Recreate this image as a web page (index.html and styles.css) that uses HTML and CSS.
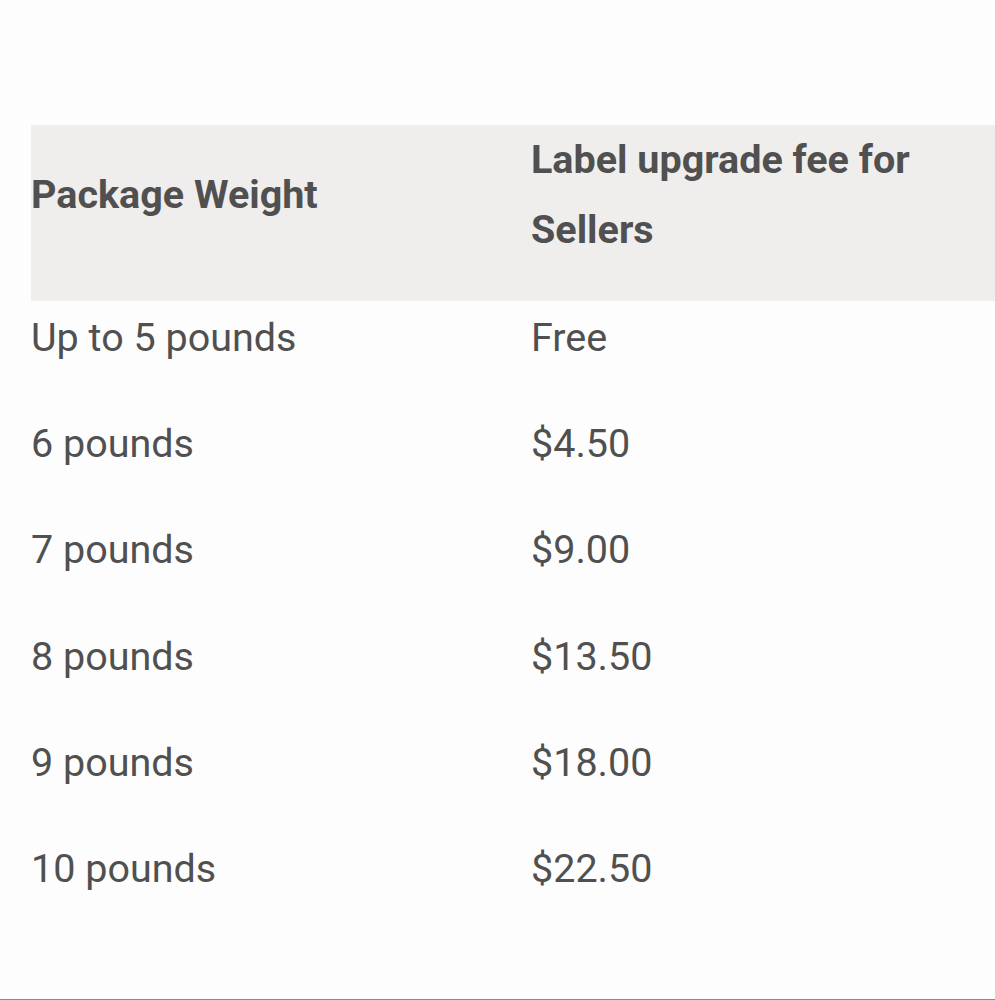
FILE: index.html
```html
<!DOCTYPE html>
<html>
<head>
  <meta charset="UTF-8">
  <title>Label upgrade fees</title>
  <link rel="stylesheet" href="styles.css">
</head>
<body>
  <div class="page">
    <table class="fee-table">
      <thead>
        <tr>
          <th class="col-weight">Package Weight</th>
          <th class="col-fee">Label upgrade fee for Sellers</th>
        </tr>
      </thead>
      <tbody>
        <tr><td>Up to 5 pounds</td><td>Free</td></tr>
        <tr><td>6 pounds</td><td>$4.50</td></tr>
        <tr><td>7 pounds</td><td>$9.00</td></tr>
        <tr><td>8 pounds</td><td>$13.50</td></tr>
        <tr><td>9 pounds</td><td>$18.00</td></tr>
        <tr><td>10 pounds</td><td>$22.50</td></tr>
      </tbody>
    </table>
  </div>
</body>
</html>
```

FILE: styles.css
```css
html, body {
  margin: 0;
  padding: 0;
  background-color: #fdfdfd;
}

body {
  font-family: Roboto, 'Liberation Sans', sans-serif;
  color: #505050;
}

.page {
  height: 1000px;
  box-sizing: border-box;
  padding: 125px 0 0 31px;
  border-bottom: 1px solid #8a8a8a;
  overflow: hidden;
}

.fee-table {
  width: 964px;
  border-collapse: collapse;
  table-layout: fixed;
}

.fee-table th,
.fee-table td {
  padding: 0 0 36px 0;
  text-align: left;
  line-height: 70px;
  font-size: 39.5px;
}

.fee-table thead tr {
  background-color: #efeeed;
}

.fee-table th {
  font-weight: 700;
  vertical-align: middle;
}

.fee-table .col-weight {
  width: 500px;
}

.fee-table td {
  padding: 2px 0 34.2px 0;
  font-weight: 400;
  vertical-align: top;
}
```
